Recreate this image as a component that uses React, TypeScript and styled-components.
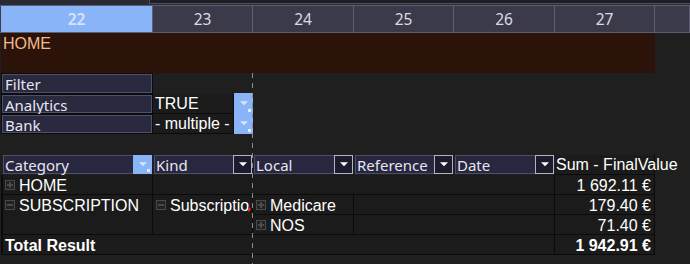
import styled, { createGlobalStyle } from 'styled-components';

const GRID_COLS = '1px 152px 100px 101px 100px 101px 100px 1fr';
const UI_FONT = `'Noto Sans', 'Open Sans', sans-serif`;
const CELL_FONT = `'Liberation Sans', Arial, sans-serif`;

const columns = ['22', '23', '24', '25', '26', '27', ''];
const headers = ['Category', 'Kind', 'Local', 'Reference', 'Date'];

const GlobalStyle = createGlobalStyle`
  html, body {
    margin: 0;
    padding: 0;
    background: #1f1f1f;
    overflow: hidden;
  }
  * { box-sizing: border-box; }
`;

const App = () => {
  return (
    <Screen>
      <GlobalStyle />
      <TopStrip>
        <FormulaEdge />
      </TopStrip>

      <ColumnBar>
        <span />
        {columns.map((c, i) => (
          <ColHead key={i} $active={i === 0}>
            {c}
          </ColHead>
        ))}
      </ColumnBar>

      <Sheet>
        <Banner>HOME</Banner>

        <Label $row={2}>Filter</Label>
        <Label $row={3}>Analytics</Label>
        <Label $row={4}>Bank</Label>
        <FilterValue $row={3}>
          <ValueText>TRUE</ValueText>
          <DropButton $active />
        </FilterValue>
        <FilterValue $row={4}>
          <ValueText>- multiple -</ValueText>
          <DropButton $active />
        </FilterValue>

        {headers.map((h, i) => (
          <HeaderCell key={h} $col={i + 2}>
            <span>{h}</span>
            <DropButton $active={i === 0} />
          </HeaderCell>
        ))}
        <SumHeader>Sum - FinalValue</SumHeader>

        <PivotCell $col="2" $row="7" $first>
          <Toggle $open={false} />
          HOME
        </PivotCell>
        <PivotCell $col="3 / 7" $row="7" />
        <Amount $row={7}>1 692.11 €</Amount>

        <PivotCell $col="2" $row="8 / 10" $first>
          <Toggle $open />
          SUBSCRIPTION
        </PivotCell>
        <PivotCell $col="3" $row="8 / 10">
          <Toggle $open />
          <Clipped>Subscription</Clipped>
          <Overflow />
        </PivotCell>
        <PivotCell $col="4" $row="8">
          <Toggle $open={false} />
          Medicare
        </PivotCell>
        <PivotCell $col="5 / 7" $row="8" />
        <Amount $row={8}>179.40 €</Amount>

        <PivotCell $col="4" $row="9">
          <Toggle $open={false} />
          NOS
        </PivotCell>
        <PivotCell $col="5 / 7" $row="9" />
        <Amount $row={9}>71.40 €</Amount>

        <PivotCell $col="2 / 7" $row="10" $first $bold>
          Total Result
        </PivotCell>
        <Amount $row={10} $bold>
          1 942.91 €
        </Amount>

        <PageBreak />
      </Sheet>
    </Screen>
  );
};

const Screen = styled.div`
  width: 690px;
  height: 264px;
  overflow: hidden;
  background: #1f1f1f;
`;

const TopStrip = styled.div`
  display: flex;
  height: 5px;
  background: #2a2a35;
`;

const FormulaEdge = styled.div`
  flex: 1;
  height: 4px;
  margin-left: 149px;
  background: #1d1d25;
  border-left: 1px solid #4f4f5e;
  border-bottom: 1px solid #4f4f5e;
`;

const ColumnBar = styled.div`
  display: grid;
  grid-template-columns: ${GRID_COLS};
  height: 28px;
  background: #3a3a4b;
  border-top: 1px solid #5e5e72;
  border-bottom: 1px solid #5e5e72;
`;

const ColHead = styled.div<{ $active?: boolean }>`
  display: flex;
  align-items: center;
  justify-content: center;
  border-right: 1px solid #5e5e72;
  background: ${(p) => (p.$active ? '#8ab4f8' : 'transparent')};
  color: ${(p) => (p.$active ? '#d6e4fb' : '#dadae4')};
  font-family: ${UI_FONT};
  font-size: 15.5px;
  font-weight: ${(p) => (p.$active ? 600 : 400)};
`;

const Sheet = styled.div`
  position: relative;
  display: grid;
  grid-template-columns: ${GRID_COLS};
  grid-template-rows: 40px 21px 20px 20px 21px 20px 20px 20px 20px 20px 1fr;
  height: 231px;
  font-family: ${CELL_FONT};
  font-size: 16px;
  color: #ffffff;
`;

const Banner = styled.div`
  grid-column: 2 / 8;
  grid-row: 1;
  background: #2c1309;
  color: #f2b98e;
  padding: 2px 2px;
  line-height: 18px;
`;

const Label = styled.div<{ $row: number }>`
  grid-column: 2;
  grid-row: ${(p) => p.$row};
  margin: 1px;
  padding: 1px 0 0 2px;
  background: #29293f;
  border: 1px solid #4f4f69;
  box-shadow: 0 0 0 1px #0b0b0b;
  color: #e6e6f0;
  font-family: ${UI_FONT};
  font-size: 15px;
  line-height: 16px;
`;

const FilterValue = styled.div<{ $row: number }>`
  grid-column: 3;
  grid-row: ${(p) => p.$row};
  display: flex;
  gap: 1px;
  padding: 0 1px 1px 0;
  background: #0b0b0b;
`;

const ValueText = styled.div`
  flex: 1;
  padding: 1px 0 0 2px;
  background: #1b1b1b;
  line-height: 18px;
  white-space: nowrap;
  overflow: hidden;
`;

const DropButton = styled.div<{ $active?: boolean }>`
  position: relative;
  width: 19px;
  flex-shrink: 0;
  background: ${(p) => (p.$active ? '#8ab4f8' : '#1c1c2c')};
  border: ${(p) => (p.$active ? 'none' : '1px solid #b2b2c6')};
  margin: -1px -1px -1px 0;

  &::before {
    content: '';
    position: absolute;
    left: 50%;
    top: 50%;
    transform: translate(-50%, -70%);
    border-left: 4px solid transparent;
    border-right: 4px solid transparent;
    border-top: 4px solid ${(p) => (p.$active ? '#d7e5fd' : '#ffffff')};
  }

  &::after {
    content: '';
    display: ${(p) => (p.$active ? 'block' : 'none')};
    position: absolute;
    right: 2px;
    bottom: 2px;
    width: 3px;
    height: 3px;
    background: #e3edff;
  }
`;

const HeaderCell = styled.div<{ $col: number }>`
  grid-column: ${(p) => p.$col};
  grid-row: 6;
  display: flex;
  justify-content: space-between;
  margin: 0 1px 1px ${(p) => (p.$col === 2 ? 2 : 1)}px;
  background: #27273f;
  border: 1px solid #4e4e68;
  color: #e6e6f0;
  font-family: ${UI_FONT};
  font-size: 15px;
  line-height: 18px;

  span {
    padding-left: 1px;
  }
`;

const SumHeader = styled.div`
  grid-column: 7;
  grid-row: 6;
  position: relative;
  z-index: 1;
  padding: 1px 0 0 1px;
  background: #1b1b1b;
  border-bottom: 1px solid #0b0b0b;
  border-right: 1px solid #0b0b0b;
  line-height: 18px;
  white-space: nowrap;
`;

const PivotCell = styled.div<{ $col: string; $row: string; $first?: boolean; $bold?: boolean }>`
  position: relative;
  grid-column: ${(p) => p.$col};
  grid-row: ${(p) => p.$row};
  display: flex;
  align-items: flex-start;
  padding: 2px 0 0 ${(p) => (p.$first ? 2 : 3)}px;
  background: #1b1b1b;
  border-right: 1px solid #0b0b0b;
  border-bottom: 1px solid #0b0b0b;
  border-left: ${(p) => (p.$first ? '2px solid #0b0b0b' : 'none')};
  font-weight: ${(p) => (p.$bold ? 700 : 400)};
  line-height: 18px;
  white-space: nowrap;
  overflow: hidden;
`;

const Toggle = styled.span<{ $open: boolean }>`
  position: relative;
  flex-shrink: 0;
  width: 10px;
  height: 10px;
  margin: 3px 4px 0 0;
  border: 1px solid #4a4a4a;
  background: #222222;

  &::before {
    content: '';
    position: absolute;
    left: 1px;
    right: 1px;
    top: 3px;
    height: 2px;
    background: #4a4a4a;
  }

  &::after {
    content: '';
    display: ${(p) => (p.$open ? 'none' : 'block')};
    position: absolute;
    top: 1px;
    bottom: 1px;
    left: 3px;
    width: 2px;
    background: #4a4a4a;
  }
`;

const Clipped = styled.span`
  width: 80px;
  overflow: hidden;
  white-space: nowrap;
`;

const Overflow = styled.span`
  position: absolute;
  right: 1px;
  top: 11px;
  border-top: 3px solid transparent;
  border-bottom: 3px solid transparent;
  border-left: 3px solid #ff2020;
`;

const Amount = styled.div<{ $row: number; $bold?: boolean }>`
  grid-column: 7;
  grid-row: ${(p) => p.$row};
  padding: 2px 3px 0 0;
  text-align: right;
  background: #1b1b1b;
  border-right: 1px solid #0b0b0b;
  border-bottom: 1px solid #0b0b0b;
  font-weight: ${(p) => (p.$bold ? 700 : 400)};
  line-height: 18px;
  white-space: nowrap;
`;

const PageBreak = styled.div`
  position: absolute;
  left: 252px;
  top: 40px;
  bottom: 0;
  width: 1px;
  z-index: 2;
  background: repeating-linear-gradient(to bottom, #8c8c8c 0 5px, transparent 5px 10px);
`;

export default App;
